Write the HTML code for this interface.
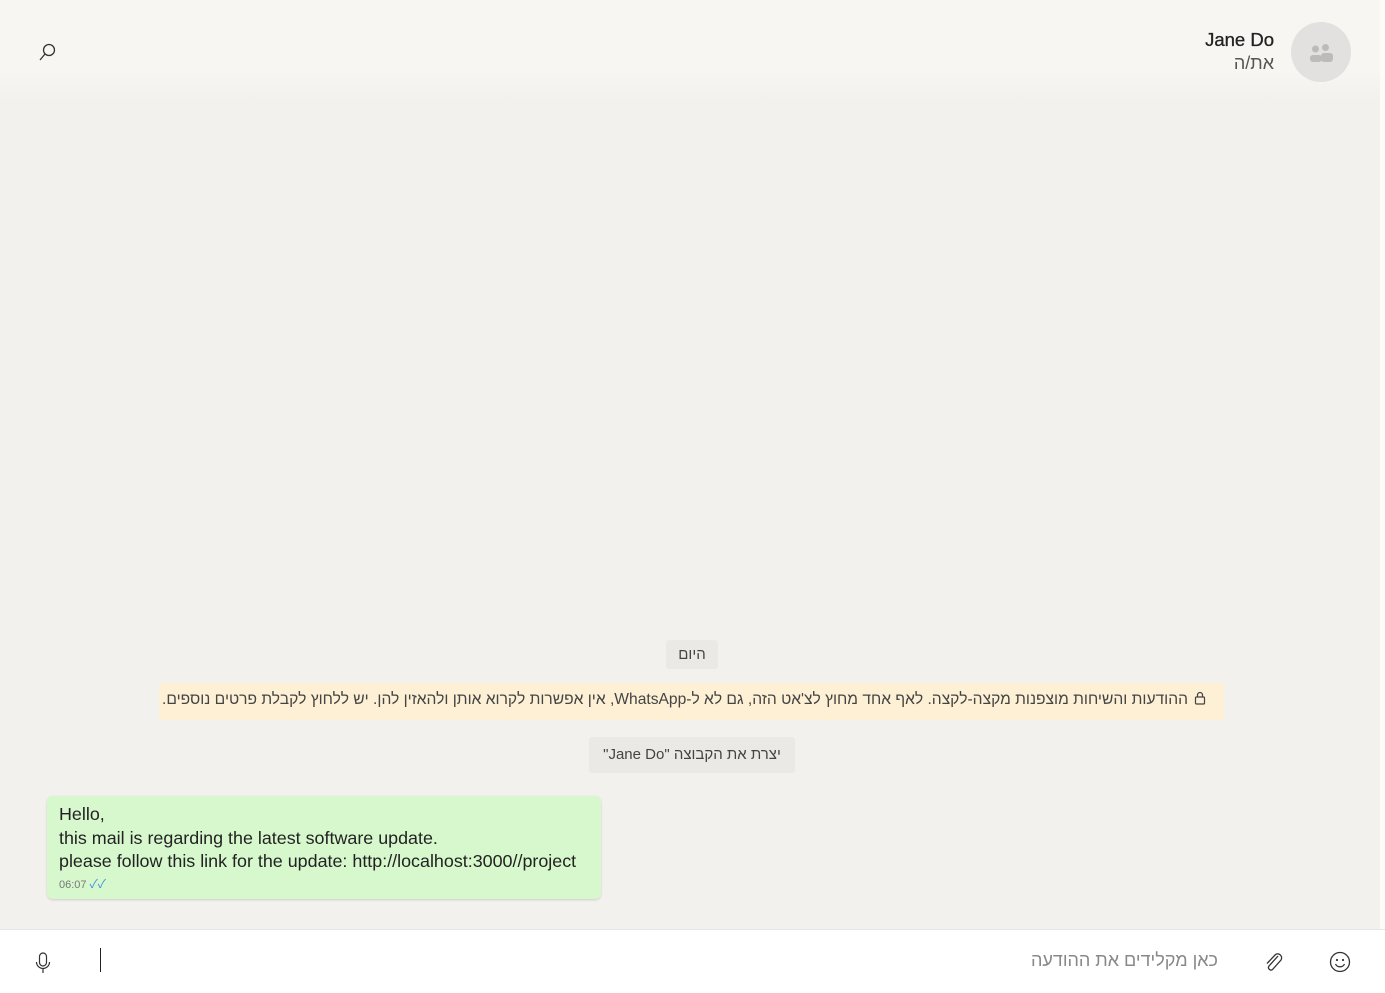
<!DOCTYPE html>
<html><head><meta charset="utf-8"><style>
*{margin:0;padding:0;box-sizing:border-box}
body{width:1385px;height:993px;overflow:hidden;background:#f3f1ed;font-family:"Liberation Sans","Noto Sans CJK SC",sans-serif;position:relative;color:#111}
.hdr{position:absolute;left:0;top:0;width:1385px;height:100px;background:linear-gradient(#f7f6f3 70%,#f3f1ed)}
.name{position:absolute;right:111px;top:29px;font-size:18.5px;color:#222;-webkit-text-stroke:.3px #222}
.sub{position:absolute;right:111px;top:53px;font-size:18px;color:#555}
.av{position:absolute;left:1291px;top:22px;width:60px;height:60px;border-radius:50%;background:#e2e1df}
.pill{position:absolute;background:#ebe9e5;color:#444;font-size:14px;text-align:center;border-radius:3px}
.warn{position:absolute;left:159px;top:683px;width:1065px;height:37px;background:#fdf0d5;font-size:15.6px;color:#444;direction:rtl;padding:8px 18px 0 0;border-radius:3px;white-space:nowrap}
.msg{position:absolute;left:47px;top:796px;width:554px;height:103px;background:#d7f8cd;border-radius:6px;box-shadow:0 1px 2px rgba(0,0,0,.15);padding:7px 12px;font-size:17.9px;line-height:23.5px;color:#222;white-space:nowrap}
.time{font-size:11px;color:#777;line-height:14px;margin-top:3px}
.bar{position:absolute;left:0;top:929px;width:1385px;height:64px;background:#fff;border-top:1px solid #e6e6e6}
.ph{position:absolute;right:167px;top:20px;font-size:18px;color:#888}
.cur{position:absolute;left:100px;top:18px;width:1px;height:24px;background:#222}
.sb{position:absolute;left:1380px;top:0;width:5px;height:929px;background:#fbfbfa}
</style></head><body>
<div class="hdr"></div>
<svg style="position:absolute;left:38px;top:42px" width="20" height="20" viewBox="0 0 20 20"><circle cx="11" cy="8" r="5.5" fill="none" stroke="#333" stroke-width="1.3"/><path d="M7 12 L2 18" stroke="#333" stroke-width="1.3"/></svg>
<div class="name">Jane Do</div>
<div class="sub">את/ה</div>
<div class="av"><svg width="60" height="60" viewBox="0 0 60 60"><circle cx="24.5" cy="27" r="3.5" fill="#bbb"/><circle cx="34.5" cy="25.5" r="3.5" fill="#bbb"/><rect x="19" y="33" width="12" height="7" rx="3" fill="#bbb"/><rect x="30" y="31" width="12" height="9" rx="3" fill="#bbb"/></svg></div>
<div class="sb"></div>
<div class="pill" style="left:666px;top:640px;width:52px;height:29px;line-height:29px;font-size:15px">היום</div>
<div class="warn"><svg width="12" height="14" viewBox="0 0 12 14" style="vertical-align:-1px;margin-left:6px"><rect x="1.5" y="6" width="9" height="7" rx="1" fill="none" stroke="#444" stroke-width="1.2"/><path d="M3.5 6V4a2.5 2.5 0 0 1 5 0v2" fill="none" stroke="#444" stroke-width="1.2"/></svg>ההודעות והשיחות מוצפנות מקצה-לקצה. לאף אחד מחוץ לצ'אט הזה, גם לא ל-WhatsApp, אין אפשרות לקרוא אותן ולהאזין להן. יש ללחוץ לקבלת פרטים נוספים.</div>
<div class="pill" style="left:589px;top:737px;width:206px;height:36px;line-height:36px;direction:rtl;font-size:15px">יצרת את הקבוצה "Jane Do"</div>
<div class="msg">Hello,<br>this mail is regarding the latest software update.<br>please follow this link for the update: http://localhost:3000//project
<div class="time">06:07 <span style="color:#3b8fe0;font-size:12px">✓✓</span></div></div>
<div class="bar">
<svg style="position:absolute;left:34px;top:21px" width="18" height="24" viewBox="0 0 18 24"><rect x="5.5" y="2" width="7" height="13" rx="3.5" fill="none" stroke="#333" stroke-width="1.2"/><path d="M2.5 11a6.5 6.5 0 0 0 13 0M9 17.5V22" fill="none" stroke="#333" stroke-width="1.2"/></svg>
<div class="cur"></div>
<div class="ph">כאן מקלידים את ההודעה</div>
<svg style="position:absolute;left:1263px;top:20px" width="22" height="24" viewBox="0 0 22 24"><path d="M15 6 L6 16 a2.5 2.5 0 0 0 3.5 3.5 L18 10 a4 4 0 0 0-5.5-5.5 L4 13.5" fill="none" stroke="#333" stroke-width="1.3"/></svg>
<svg style="position:absolute;left:1328px;top:20px" width="24" height="24" viewBox="0 0 24 24"><circle cx="12" cy="12" r="9.5" fill="none" stroke="#333" stroke-width="1.3"/><circle cx="9" cy="10" r="1.1" fill="#333"/><circle cx="15" cy="10" r="1.1" fill="#333"/><path d="M7.5 14a5 5 0 0 0 9 0" fill="none" stroke="#333" stroke-width="1.3"/></svg>
</div>
</body></html>
